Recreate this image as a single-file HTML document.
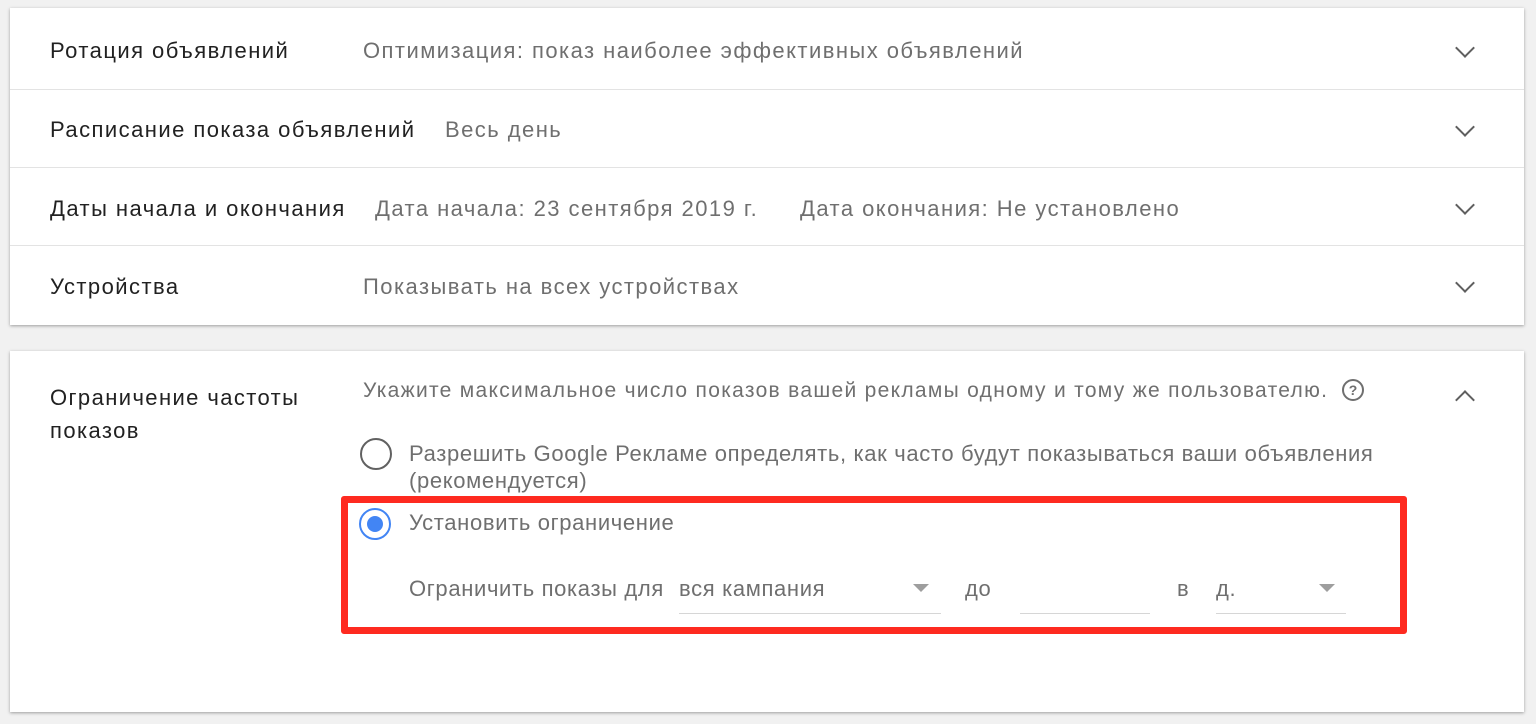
<!DOCTYPE html>
<html><head><meta charset="utf-8"><style>
body{margin:0;width:1536px;height:724px;background:#f1f1f1;font-family:"Liberation Sans",Arial,sans-serif;position:relative;overflow:hidden}
.card{position:absolute;left:10px;width:1514px;background:#fff;box-shadow:0 1px 3px rgba(0,0,0,.35)}
.row{position:absolute;left:0;width:100%;border-bottom:1px solid #e3e3e3}
.t{position:absolute;font-size:22px;color:#212121;white-space:nowrap;letter-spacing:1.45px}
.g{position:absolute;font-size:22px;color:#6f6f6f;white-space:nowrap;letter-spacing:1.45px}
.o{letter-spacing:0.65px}
.chev{position:absolute;width:12px;height:12px;border-right:2.5px solid #5f5f5f;border-bottom:2.5px solid #5f5f5f}
.tri{position:absolute;width:0;height:0;border-left:8px solid transparent;border-right:8px solid transparent;border-top:8px solid #9e9e9e}
.ul{position:absolute;height:1px;background:#d6d6d6}
</style></head><body>
<div class="card" style="top:8px;height:317px">
 <div class="row" style="top:0;height:81px"></div>
 <div class="row" style="top:81px;height:78px"></div>
 <div class="row" style="top:159px;height:78px"></div>
 <div class="t" style="left:40px;top:30px">Ротация объявлений</div>
 <div class="g" style="left:353px;top:30px">Оптимизация: показ наиболее эффективных объявлений</div>
 <div class="t" style="left:40px;top:109px">Расписание показа объявлений</div>
 <div class="g" style="left:435px;top:109px">Весь день</div>
 <div class="t" style="left:40px;top:188px">Даты начала и окончания</div>
 <div class="g" style="left:365px;top:188px">Дата начала: 23 сентября 2019 г.</div>
 <div class="g" style="left:790px;top:188px">Дата окончания: Не установлено</div>
 <div class="t" style="left:40px;top:266px">Устройства</div>
 <div class="g" style="left:353px;top:266px">Показывать на всех устройствах</div>
 <div class="chev" style="left:1448px;top:33px;transform:rotate(45deg)"></div>
 <div class="chev" style="left:1448px;top:112px;transform:rotate(45deg)"></div>
 <div class="chev" style="left:1448px;top:190px;transform:rotate(45deg)"></div>
 <div class="chev" style="left:1448px;top:268px;transform:rotate(45deg)"></div>
</div>
<div class="card" style="top:351px;height:361px">
 <div class="t" style="left:40px;top:30px;line-height:33px;letter-spacing:1.4px">Ограничение частоты<br>показов</div>
 <div class="g" style="left:353px;top:28px;font-size:21px;letter-spacing:1.3px">Укажите максимальное число показов вашей рекламы одному и тому же пользователю.</div>
 <div style="position:absolute;left:1332px;top:28px;width:18px;height:18px;border:2px solid #6f6f6f;border-radius:50%;font-size:14px;font-weight:bold;color:#6f6f6f;text-align:center;line-height:18px">?</div>
 <div class="chev" style="left:1448px;top:42px;transform:rotate(225deg)"></div>
 <div style="position:absolute;left:350px;top:87px;width:32px;height:32px;border:2.5px solid #616161;border-radius:50%;box-sizing:border-box"></div>
 <div class="g o" style="left:399px;top:89px;line-height:27px">Разрешить Google Рекламе определять, как часто будут показываться ваши объявления<br>(рекомендуется)</div>
 <div style="position:absolute;left:349px;top:157px;width:32px;height:32px;border:2.5px solid #4285f4;border-radius:50%;box-sizing:border-box"></div>
 <div style="position:absolute;left:357px;top:165px;width:16px;height:16px;background:#4285f4;border-radius:50%"></div>
 <div class="g o" style="left:399px;top:159px">Установить ограничение</div>
 <div class="g o" style="left:399px;top:225px">Ограничить показы для</div>
 <div class="g o" style="left:669px;top:225px">вся кампания</div>
 <div class="tri" style="left:903px;top:233px"></div>
 <div class="ul" style="left:669px;top:262px;width:262px"></div>
 <div class="g o" style="left:955px;top:225px">до</div>
 <div class="ul" style="left:1010px;top:262px;width:130px"></div>
 <div class="g o" style="left:1167px;top:225px">в</div>
 <div class="g o" style="left:1206px;top:225px">д.</div>
 <div class="tri" style="left:1309px;top:233px"></div>
 <div class="ul" style="left:1206px;top:262px;width:130px"></div>
</div>
<div style="position:absolute;left:341px;top:496px;width:1066px;height:138px;border:7px solid #fe2a20;border-radius:3px;box-sizing:border-box"></div>
</body></html>
